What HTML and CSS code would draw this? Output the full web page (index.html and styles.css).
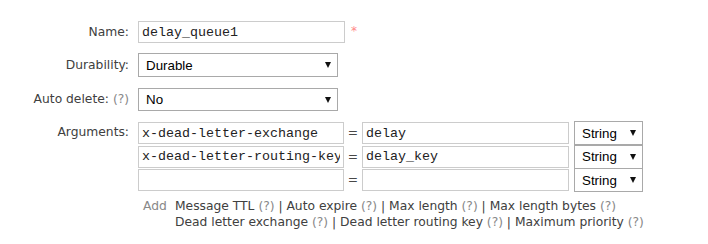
FILE: index.html
```html
<!DOCTYPE html>
<html lang="en">
<head>
    <meta charset="UTF-8">
    <title>Add a new queue</title>
    <link rel="stylesheet" href="styles.css">
</head>
<body>
    <form class="queue-form">
        <div class="row row-name">
            <label class="label">Name:</label>
            <div class="field">
                <input class="text wide" type="text" value="delay_queue1">
                <span class="mand">*</span>
            </div>
        </div>

        <div class="row row-durability">
            <label class="label">Durability:</label>
            <div class="field">
                <span class="select-wrap big">
                    <select class="select"><option>Durable</option><option>Transient</option></select>
                </span>
            </div>
        </div>

        <div class="row row-autodelete">
            <label class="label">Auto delete: <span class="help">(?)</span></label>
            <div class="field">
                <span class="select-wrap big">
                    <select class="select"><option>No</option><option>Yes</option></select>
                </span>
            </div>
        </div>

        <div class="row row-args">
            <label class="label">Arguments:</label>
            <div class="args">
                <div class="arg">
                    <input class="text key" type="text" value="x-dead-letter-exchange">
                    <span class="eq">=</span>
                    <input class="text val" type="text" value="delay">
                    <span class="select-wrap small">
                        <select class="select"><option>String</option><option>Number</option><option>Boolean</option></select>
                    </span>
                </div>
                <div class="arg">
                    <input class="text key" type="text" value="x-dead-letter-routing-key">
                    <span class="eq">=</span>
                    <input class="text val" type="text" value="delay_key">
                    <span class="select-wrap small">
                        <select class="select"><option>String</option><option>Number</option><option>Boolean</option></select>
                    </span>
                </div>
                <div class="arg">
                    <input class="text key" type="text" value="">
                    <span class="eq">=</span>
                    <input class="text val" type="text" value="">
                    <span class="select-wrap small">
                        <select class="select"><option>String</option><option>Number</option><option>Boolean</option></select>
                    </span>
                </div>

                <div class="add-help">
                    <span class="add">Add</span>
                    <div class="links">
                        <p>Message TTL <span class="help">(?)</span> | Auto expire <span class="help">(?)</span> | Max length <span class="help">(?)</span> | Max length bytes <span class="help">(?)</span></p>
                        <p>Dead letter exchange <span class="help">(?)</span> | Dead letter routing key <span class="help">(?)</span> | Maximum priority <span class="help">(?)</span></p>
                    </div>
                </div>
            </div>
        </div>
    </form>
</body>
</html>
```

FILE: styles.css
```css
body {
    margin: 8px;
    font-family: "DejaVu Sans", Verdana, sans-serif;
    font-size: 12.3px;
    color: #404040;
    background: #fff;
}

.queue-form {
    display: flex;
    flex-direction: column;
    padding-top: 13px;
}

.row {
    display: flex;
    align-items: flex-start;
}

.label {
    width: 121px;
    text-align: right;
    padding-right: 9px;
    flex-shrink: 0;
}

.row-name .label { line-height: 22px; }
.row-durability { margin-top: 10px; }
.row-durability .label { line-height: 24px; }
.row-autodelete { margin-top: 11px; }
.row-autodelete .label { line-height: 23px; }
.row-args { margin-top: 10px; }
.row-args .label { line-height: 22px; }

.field {
    display: flex;
    align-items: flex-start;
}

.help {
    color: #888;
}

.mand {
    color: #f88;
    margin-left: 6px;
    line-height: 20px;
    font-size: 12px;
}

.text {
    box-sizing: border-box;
    height: 22px;
    margin: 0;
    padding: 0 3px;
    border: 1px solid #ccc;
    font-family: "Liberation Mono", "Courier New", monospace;
    font-size: 13.33px;
    color: #222;
    background: #fff;
    outline: none;
}

.wide { width: 207px; }
.key { width: 206px; }
.val { width: 207px; }

.select-wrap {
    position: relative;
    display: inline-block;
}

.select-wrap::after {
    content: "";
    position: absolute;
    top: 50%;
    right: 7px;
    margin-top: -3px;
    border-left: 3.5px solid transparent;
    border-right: 3.5px solid transparent;
    border-top: 6px solid #111;
    pointer-events: none;
}

.select {
    -webkit-appearance: none;
    appearance: none;
    box-sizing: border-box;
    margin: 0;
    border: 1px solid #a9a9a9;
    border-radius: 0;
    background: #fff;
    font-family: "Liberation Sans", Arial, sans-serif;
    font-size: 13.33px;
    color: #000;
    outline: none;
}

.big .select {
    width: 200px;
    height: 24px;
    padding: 0 20px 0 7px;
}

.row-autodelete .big .select { height: 23px; }

.small .select {
    width: 69px;
    height: 24px;
    padding: 0 18px 0 7px;
}

.args {
    display: flex;
    flex-direction: column;
}

.arg {
    display: flex;
    align-items: center;
    margin-bottom: -0.5px;
}

.arg .text { margin: 1px 0; }

.eq {
    width: 18px;
    text-align: center;
    color: #484848;
}

.arg .select-wrap { margin-left: 5px; }

.add-help {
    display: flex;
    margin-top: 6px;
    line-height: 16px;
}

.add {
    color: #888;
    width: 32px;
    padding-left: 5px;
}

.links p {
    margin: 0;
}
```
